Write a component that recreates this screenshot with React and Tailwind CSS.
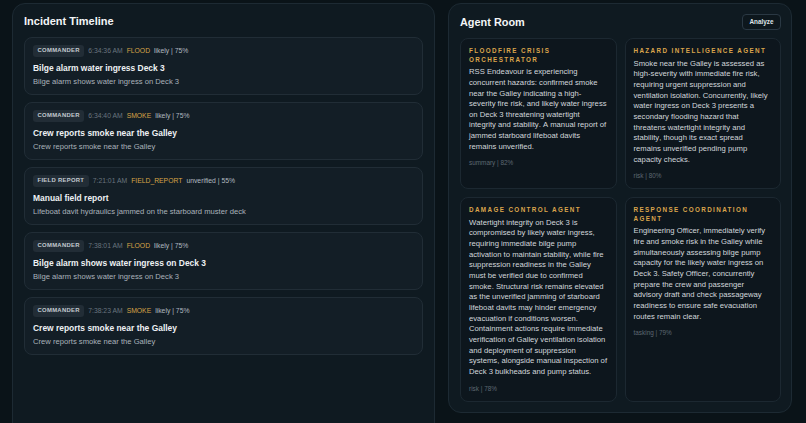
import React from "react";

const timeline = [
  { who: "COMMANDER", time: "6:34:36 AM", tag: "FLOOD", meta: "likely | 75%", title: "Bilge alarm water ingress Deck 3", body: "Bilge alarm shows water ingress on Deck 3" },
  { who: "COMMANDER", time: "6:34:40 AM", tag: "SMOKE", meta: "likely | 75%", title: "Crew reports smoke near the Galley", body: "Crew reports smoke near the Galley" },
  { who: "FIELD REPORT", time: "7:21:01 AM", tag: "FIELD_REPORT", meta: "unverified | 55%", title: "Manual field report", body: "Lifeboat davit hydraulics jammed on the starboard muster deck" },
  { who: "COMMANDER", time: "7:38:01 AM", tag: "FLOOD", meta: "likely | 75%", title: "Bilge alarm shows water ingress on Deck 3", body: "Bilge alarm shows water ingress on Deck 3" },
  { who: "COMMANDER", time: "7:38:23 AM", tag: "SMOKE", meta: "likely | 75%", title: "Crew reports smoke near the Galley", body: "Crew reports smoke near the Galley" },
];

const agents = [
  {
    name: "FLOODFIRE CRISIS ORCHESTRATOR",
    text: "RSS Endeavour is experiencing concurrent hazards: confirmed smoke near the Galley indicating a high-severity fire risk, and likely water ingress on Deck 3 threatening watertight integrity and stability. A manual report of jammed starboard lifeboat davits remains unverified.",
    foot: "summary | 82%",
  },
  {
    name: "HAZARD INTELLIGENCE AGENT",
    text: "Smoke near the Galley is assessed as high-severity with immediate fire risk, requiring urgent suppression and ventilation isolation. Concurrently, likely water ingress on Deck 3 presents a secondary flooding hazard that threatens watertight integrity and stability, though its exact spread remains unverified pending pump capacity checks.",
    foot: "risk | 80%",
  },
  {
    name: "DAMAGE CONTROL AGENT",
    text: "Watertight integrity on Deck 3 is compromised by likely water ingress, requiring immediate bilge pump activation to maintain stability, while fire suppression readiness in the Galley must be verified due to confirmed smoke. Structural risk remains elevated as the unverified jamming of starboard lifeboat davits may hinder emergency evacuation if conditions worsen. Containment actions require immediate verification of Galley ventilation isolation and deployment of suppression systems, alongside manual inspection of Deck 3 bulkheads and pump status.",
    foot: "risk | 78%",
  },
  {
    name: "RESPONSE COORDINATION AGENT",
    text: "Engineering Officer, immediately verify fire and smoke risk in the Galley while simultaneously assessing bilge pump capacity for the likely water ingress on Deck 3. Safety Officer, concurrently prepare the crew and passenger advisory draft and check passageway readiness to ensure safe evacuation routes remain clear.",
    foot: "tasking | 79%",
  },
];

const TimelineCard = ({ item }) => (
  <div className="h-[58px] rounded-[8px] border border-[#212d36] bg-[#131e26] px-[8px] pt-[7px]">
    <div className="flex items-center gap-[4px] text-[6.8px] leading-none">
      <span className="rounded-[3px] bg-[#222d36] px-[4.5px] py-[3.2px] text-[5.9px] font-bold tracking-[0.05em] text-[#c3cad0]">
        {item.who}
      </span>
      <span className="text-[#69747e]">{item.time}</span>
      <span className="text-[#d7a446]">{item.tag}</span>
      <span className="text-[#b1b9c0]">{item.meta}</span>
    </div>
    <div className="mt-[5px] text-[8.45px] font-bold leading-[12px] text-[#eef1f4]">{item.title}</div>
    <div className="mt-[1.5px] text-[7.65px] leading-[11px] text-[#a9b2ba]">{item.body}</div>
  </div>
);

const AgentCard = ({ agent }) => (
  <div className="flex flex-col rounded-[8px] border border-[#1c2831] bg-[#0d161d] px-[8px] pt-[8px] pb-[8px]">
    <div className="text-[6.3px] font-bold leading-[8.6px] tracking-[0.22em] text-[#dba54c]">{agent.name}</div>
    <p className="mt-[3px] text-[7.7px] leading-[10.65px] text-[#d2d7dc] [font-kerning:none]">{agent.text}</p>
    <div className="mt-[7px] text-[6.4px] leading-[8px] text-[#5d6872]">{agent.foot}</div>
  </div>
);

export default function App() {
  return (
    <div
      className="h-[423px] overflow-hidden bg-[#0a1318] pl-[12px] pr-[14px] pt-[3px]"
      style={{ fontFamily: "'Liberation Sans', Arial, sans-serif" }}
    >
      <div className="flex items-start gap-[13px]">
        <section className="h-[440px] w-[423px] shrink-0 rounded-[13px] border border-[#1d2a33] bg-[#0f1a21] px-[11px] pt-[9px]">
          <h2 className="text-[11px] font-bold leading-[16px] text-[#f3f5f7]">Incident Timeline</h2>
          <div className="mt-[8px] flex flex-col gap-[7px]">
            {timeline.map((item, i) => (
              <TimelineCard key={i} item={item} />
            ))}
          </div>
        </section>

        <section className="w-[344px] shrink-0 rounded-[13px] border border-[#1d2a33] bg-[#0f1a21] pl-[11px] pr-[10px] pt-[10px] pb-[10px]">
          <div className="flex items-center justify-between">
            <h2 className="text-[10.9px] font-bold leading-[16px] text-[#f3f5f7]">Agent Room</h2>
            <button className="h-[16px] rounded-[4px] border border-[#2a3843] bg-[#0d171d] px-[6.5px] text-[6.35px] font-bold text-[#dfe4e8]">
              Analyze
            </button>
          </div>
          <div className="mt-[8px] grid grid-cols-2 gap-[8px]">
            {agents.map((a, i) => (
              <AgentCard key={i} agent={a} />
            ))}
          </div>
        </section>
      </div>
    </div>
  );
}
